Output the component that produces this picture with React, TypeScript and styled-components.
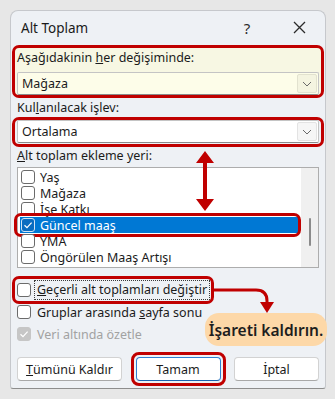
import React from "react";
import styled, { createGlobalStyle, css } from "styled-components";

const GlobalStyle = createGlobalStyle`
  body {
    margin: 0;
    background: #e7e7e7;
    font-family: "Noto Sans", "Open Sans", sans-serif;
    color: #1b1b1b;
  }
`;

const RED = "#c00000";

const fields = ["Yaş", "Mağaza", "İşe Katkı", "Güncel maaş", "YMA", "Öngörülen Maaş Artışı"];
const selectedField = "Güncel maaş";

function CheckIcon({ color }: { color: string }) {
  return (
    <svg width="10" height="10" viewBox="0 0 10 10">
      <path d="M1.5 5.2 L4 7.6 L8.6 2.6" fill="none" stroke={color} strokeWidth="1.2" />
    </svg>
  );
}

function Chevron() {
  return (
    <svg width="10" height="6" viewBox="0 0 10 6">
      <path d="M1 1 L5 5 L9 1" fill="none" stroke="#6a6a6a" strokeWidth="1" />
    </svg>
  );
}

function App() {
  return (
    <>
      <GlobalStyle />
      <Page>
        <Dialog>
          <TitleBar>
            <Title>Alt Toplam</Title>
            <TitleButton>?</TitleButton>
            <TitleButton>
              <svg width="13" height="13" viewBox="0 0 13 13">
                <path d="M1 1 L12 12 M12 1 L1 12" stroke="#2b2b2b" strokeWidth="1.3" />
              </svg>
            </TitleButton>
          </TitleBar>

          <Content>
            {/* her değişiminde */}
            <Annot $highlight>
              <Label $tight>
                Aşağıdakinin <u>h</u>er değişiminde:
              </Label>
              <Select $yellow>
                <SelectText>Mağaza</SelectText>
                <ChevronBox $yellow>
                  <Chevron />
                </ChevronBox>
              </Select>
            </Annot>

            <Label>
              Kul<u>l</u>anılacak işlev:
            </Label>
            <Annot $bottomGap>
              <Select>
                <SelectText>Ortalama</SelectText>
                <ChevronBox>
                  <Chevron />
                </ChevronBox>
              </Select>
            </Annot>

            <Label $top={1}>
              <u>A</u>lt toplam ekleme yeri:
            </Label>
            <ListBox>
              <ListItems>
                {fields.map((f) => {
                  const sel = f === selectedField;
                  return (
                    <ListRow key={f} $selected={sel}>
                      <Box $checked={sel} $inverse={sel}>
                        {sel && <CheckIcon color="#ffffff" />}
                      </Box>
                      <span>{f}</span>
                    </ListRow>
                  );
                })}
              </ListItems>
              <ScrollTrack>
                <ScrollThumb />
              </ScrollTrack>
            </ListBox>

            <Options>
              <OptionRow $annotated>
                <Box />
                <FocusText>
                  <u>G</u>eçerli alt toplamları değiştir
                </FocusText>
              </OptionRow>
              <OptionRow>
                <Box />
                <OptionText>
                  Gruplar arasında <u>s</u>ayfa sonu
                </OptionText>
              </OptionRow>
              <OptionRow>
                <Box $checked $disabled>
                  <CheckIcon color="#ffffff" />
                </Box>
                <OptionText $disabled>Veri altında özetle</OptionText>
              </OptionRow>
            </Options>

            <ButtonRow>
              <Button $w={105}>
                <u>T</u>ümünü Kaldır
              </Button>
              <Button $w={85} $default $annotated>
                Tamam
              </Button>
              <Button $w={85}>İptal</Button>
            </ButtonRow>
          </Content>

          {/* annotations laid over the dialog */}
          <DoubleArrow viewBox="0 0 18 60" width="18" height="60">
            <polygon
              points="9,0 18,12 11,12 11,48 18,48 9,60 0,48 7,48 7,12 0,12"
              fill={RED}
            />
          </DoubleArrow>
          <Connector viewBox="0 0 62 40" width="62" height="40">
            <path d="M0 16 H42 Q53 16 53 27 V30" fill="none" stroke={RED} strokeWidth="3" />
            <polygon points="46,28 60,28 53,39" fill={RED} />
          </Connector>
          <Callout>İşareti kaldırın.</Callout>
        </Dialog>
      </Page>
    </>
  );
}

export default App;

const Page = styled.div`
  padding: 10px 0 0 10px;
`;

const Dialog = styled.div`
  position: relative;
  box-sizing: border-box;
  width: 316px;
  background: #eef1f5;
  border: 1px solid #c6c8cc;
  border-radius: 8px 8px 3px 3px;
  border-bottom-color: #8d8d8d;
`;

const TitleBar = styled.div`
  height: 33px;
  display: flex;
  align-items: center;
  padding: 0 0 0 10px;
`;

const Title = styled.div`
  flex: 1;
  font-size: 13.5px;
  color: #1a1a1a;
`;

const TitleButton = styled.div`
  width: 52px;
  height: 33px;
  display: flex;
  align-items: center;
  justify-content: center;
  font-size: 15px;
  color: #2b2b2b;
`;

const Content = styled.div`
  padding: 0 6px 7px;
  font-size: 12.5px;
`;

const Annot = styled.div<{ $highlight?: boolean; $bottomGap?: boolean }>`
  margin: 1px -5px 0;
  border: 3px solid ${RED};
  border-radius: 7px;
  padding: 2px 2px 0;
  background: ${(p) => (p.$highlight ? "#f7f7e3" : "transparent")};
  ${(p) =>
    p.$bottomGap &&
    css`
      padding: 0 2px 1px;
    `}
`;

const Label = styled.div<{ $tight?: boolean; $top?: number }>`
  height: 16px;
  line-height: 16px;
  margin-top: ${(p) => (p.$tight ? 0 : p.$top ?? 2)}px;
  white-space: nowrap;
`;

const Select = styled.div<{ $yellow?: boolean }>`
  box-sizing: border-box;
  height: 23px;
  margin-top: ${(p) => (p.$yellow ? 6 : 0)}px;
  display: flex;
  align-items: stretch;
  background: ${(p) => (p.$yellow ? "#fdfde9" : "#ffffff")};
  border: 1px solid #c4c4c4;
  border-bottom-color: #8a8a8a;
  border-radius: 2px;
`;

const SelectText = styled.div`
  flex: 1;
  padding-left: 4px;
  display: flex;
  align-items: center;
`;

const ChevronBox = styled.div<{ $yellow?: boolean }>`
  width: 18px;
  margin: 1px;
  display: flex;
  align-items: center;
  justify-content: center;
  background: ${(p) => (p.$yellow ? "#f4f4e0" : "#f6f6f6")};
  border: 1px solid ${(p) => (p.$yellow ? "#e2e2cf" : "#e3e3e3")};
  border-radius: 2px;
`;

const ListBox = styled.div`
  box-sizing: border-box;
  height: 101px;
  margin-top: 3px;
  display: flex;
  background: #ffffff;
  border: 1px solid #adadad;
`;

const ListItems = styled.div`
  flex: 1;
  padding-top: 1px;
`;

const ListRow = styled.div<{ $selected?: boolean }>`
  position: relative;
  height: 16px;
  margin: 0 3px 0 2px;
  padding-left: 1px;
  display: flex;
  align-items: center;
  gap: 5px;
  white-space: nowrap;
  ${(p) =>
    p.$selected &&
    css`
      background: #0078d4;
      color: #ffffff;
      &::after {
        content: "";
        position: absolute;
        left: -6px;
        right: -3px;
        top: -4px;
        bottom: -4px;
        border: 3px solid ${RED};
        border-radius: 7px;
      }
    `}
`;

const ScrollTrack = styled.div`
  width: 17px;
  background: #f0f0f0;
  display: flex;
  justify-content: center;
`;

const ScrollThumb = styled.div`
  width: 2px;
  height: 28px;
  margin-top: 50px;
  background: #8b8b8b;
  border-radius: 1px;
`;

const Box = styled.div<{ $checked?: boolean; $inverse?: boolean; $disabled?: boolean }>`
  box-sizing: border-box;
  flex: none;
  width: 14px;
  height: 14px;
  border-radius: 3px;
  border: 1px solid #6b6b6b;
  background: #ffffff;
  display: flex;
  align-items: center;
  justify-content: center;
  ${(p) =>
    p.$inverse &&
    css`
      background: #0a6cc0;
      border-color: #cfe3f5;
    `}
  ${(p) =>
    p.$disabled &&
    css`
      background: #c6c6c6;
      border-color: #c6c6c6;
    `}
`;

const Options = styled.div`
  margin-top: 11px;
`;

const OptionRow = styled.div<{ $annotated?: boolean }>`
  position: relative;
  width: fit-content;
  height: 22px;
  display: flex;
  align-items: center;
  gap: 3px;
  white-space: nowrap;
  ${(p) =>
    p.$annotated &&
    css`
      &::after {
        content: "";
        position: absolute;
        left: -5px;
        right: -4px;
        top: -3px;
        bottom: -3px;
        border: 3px solid ${RED};
        border-radius: 7px;
      }
    `}
`;

const FocusText = styled.span`
  border: 1px dotted #3a3a3a;
  padding: 1px 2px;
  line-height: 16px;
`;

const OptionText = styled.span<{ $disabled?: boolean }>`
  padding-left: 3px;
  color: ${(p) => (p.$disabled ? "#a2a2a2" : "inherit")};
`;

const ButtonRow = styled.div`
  margin-top: 12px;
  display: flex;
  justify-content: space-between;
`;

const Button = styled.div<{ $w: number; $default?: boolean; $annotated?: boolean }>`
  position: relative;
  box-sizing: border-box;
  width: ${(p) => p.$w}px;
  height: 24px;
  display: flex;
  align-items: center;
  justify-content: center;
  background: #ffffff;
  border: 1px solid ${(p) => (p.$default ? "#2f7fd0" : "#d2d2d2")};
  border-bottom-color: ${(p) => (p.$default ? "#1d64b0" : "#a8a8a8")};
  border-radius: 4px;
  ${(p) =>
    p.$annotated &&
    css`
      &::after {
        content: "";
        position: absolute;
        inset: -6px;
        border: 3px solid ${RED};
        border-radius: 8px;
      }
    `}
`;

const DoubleArrow = styled.svg`
  position: absolute;
  left: 185px;
  top: 140px;
`;

const Connector = styled.svg`
  position: absolute;
  left: 203px;
  top: 263px;
`;

const Callout = styled.div`
  position: absolute;
  left: 194px;
  top: 302px;
  box-sizing: border-box;
  width: 122px;
  height: 33px;
  display: flex;
  align-items: center;
  justify-content: center;
  background: #fdd8a8;
  border-radius: 14px;
  font-size: 15.5px;
  font-weight: 600;
  color: #1e1e1e;
  white-space: nowrap;
`;
